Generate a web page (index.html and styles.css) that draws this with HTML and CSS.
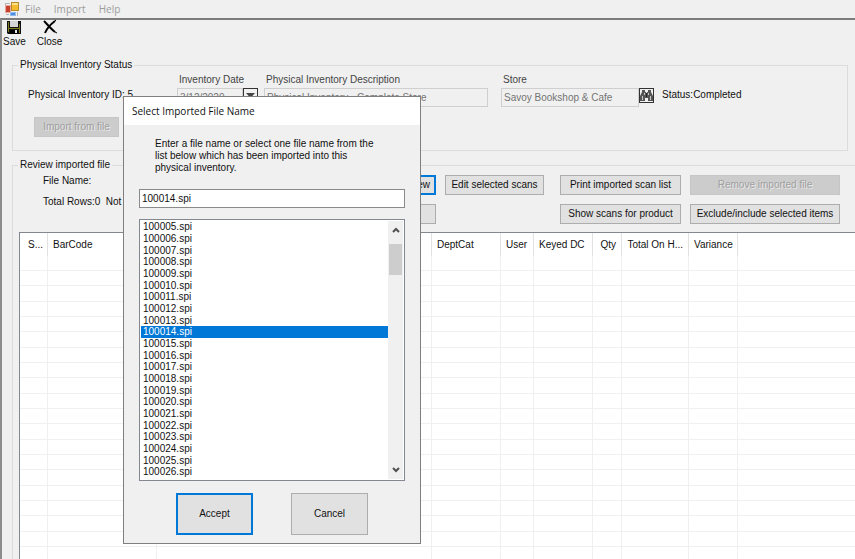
FILE: index.html
```
<!DOCTYPE html>
<html lang="en">
<head>
    <meta charset="UTF-8">
    <meta name="viewport" content="width=device-width, initial-scale=1.0">
    <title>Physical Inventory</title>
    <link rel="stylesheet" href="styles.css">
</head>
<body>
    <nav class="menubar">
        <svg class="app-icon" width="14" height="14" viewBox="0 0 14 14">
            <rect x="0.5" y="3.5" width="5" height="7" fill="#c8412f" stroke="#e6a79c"/>
            <rect x="6.5" y="0.5" width="7" height="8" fill="#f4bc2c" stroke="#b98a2a"/>
            <rect x="7" y="1" width="6" height="2" fill="#fbe08a"/>
            <rect x="5.5" y="10.5" width="5" height="3" fill="#4c8be0" stroke="#8fb8ef"/>
            <path d="M0 1.500h5M0.500 1v2M1 12.500h3M12.500 10v4" stroke="#b4b4b4"/>
        </svg>
        <a href="#">File</a>
        <a href="#">Import</a>
        <a href="#">Help</a>
    </nav>

    <main class="window">
        <div class="toolbar">
            <button class="tool" type="button">
                <svg width="14" height="14" viewBox="0 0 14 14">
                    <path d="M0 1h14v13H1L0 13z" fill="#111"/>
                    <path d="M1 2h1v10H1zM12 4h1v9h-1zM2 8h10v1H2z" fill="#7d7a1c"/>
                    <rect x="3" y="1" width="8" height="6" fill="#d4d4d4"/>
                    <rect x="3" y="10" width="8" height="4" fill="#000"/>
                    <rect x="8" y="10" width="2" height="3" fill="#e8e8e8"/>
                </svg>
                Save
            </button>
            <button class="tool" type="button">
                <svg width="14" height="14" viewBox="0 0 14 14">
                    <path d="M1 1c3 3 7 8 11 11M12 1C8 4 4 8 2 13" fill="none" stroke="#000" stroke-width="2"/>
                    <path d="M12 12l2 1M12 1l1-1" stroke="#000"/>
                </svg>
                Close
            </button>
        </div>

        <fieldset class="status">
            <legend>Physical Inventory Status</legend>
            <div class="status-grid">
                <div class="inventory-id">
                    <span>Physical Inventory ID: 5</span>
                    <button class="btn" type="button" disabled>Import from file</button>
                </div>
                <div class="field">
                    <label for="date">Inventory Date</label>
                    <div class="field-row">
                        <input id="date" type="text" value="3/12/2020" disabled>
                        <button class="picker" type="button" aria-label="Open calendar">
                            <svg width="9" height="6" viewBox="0 0 9 6"><path d="M0 0h9L4.500 5z" fill="#444"/></svg>
                        </button>
                    </div>
                </div>
                <div class="field">
                    <label for="description">Physical Inventory Description</label>
                    <div class="field-row">
                        <input id="description" type="text" value="Physical Inventory - Complete Store" disabled>
                    </div>
                </div>
                <div class="field store">
                    <label for="store">Store</label>
                    <div class="field-row">
                        <input id="store" type="text" value="Savoy Bookshop &amp; Cafe" disabled>
                        <button class="picker" type="button" aria-label="Find store">
                            <svg width="13" height="13" viewBox="0 0 13 13">
                                <path d="M2 1h3v2h1v1h1V3h1V1h3v2l2 4v5H8V9H5v3H0V7l2-4z" fill="#555"/>
                                <path d="M2 7h1v4H2zM10 7h1v4h-1zM4 4h1v2H4zM8 4h1v2H8z" fill="#c8c8c8"/>
                                <path d="M6 4h1v4H6z" fill="#222"/>
                            </svg>
                        </button>
                    </div>
                </div>
                <span class="state">Status:Completed</span>
            </div>
        </fieldset>

        <fieldset class="review">
            <legend>Review imported file</legend>
            <div class="review-head">
                <div class="file-info">
                    <span>File Name:</span>
                    <span>Total Rows:0&nbsp; Not</span>
                </div>
                <div class="actions">
                    <div class="group">
                        <button class="btn focused right" type="button">Review</button>
                        <button class="btn" type="button" aria-label="Clear"></button>
                    </div>
                    <div class="group edit">
                        <button class="btn" type="button">Edit selected scans</button>
                    </div>
                    <div class="group">
                        <button class="btn" type="button">Print imported scan list</button>
                        <button class="btn" type="button">Show scans for product</button>
                    </div>
                    <div class="group">
                        <button class="btn" type="button" disabled>Remove imported file</button>
                        <button class="btn" type="button">Exclude/include selected items</button>
                    </div>
                </div>
            </div>
            <table class="scans">
                <colgroup>
                    <col class="c-seq"><col class="c-barcode"><col class="c-title"><col class="c-dept"><col class="c-user">
                    <col class="c-keyed"><col class="c-qty"><col class="c-total"><col class="c-variance"><col>
                </colgroup>
                <thead>
                    <tr>
                        <th class="first">S...</th>
                        <th>BarCode</th>
                        <th></th>
                        <th>DeptCat</th>
                        <th>User</th>
                        <th>Keyed DC</th>
                        <th class="num">Qty</th>
                        <th class="num">Total On H...</th>
                        <th>Variance</th>
                        <th></th>
                    </tr>
                </thead>
                <tbody id="scanRows"></tbody>
            </table>
        </fieldset>
    </main>

    <form class="dialog" role="dialog" aria-labelledby="dialogTitle">
        <h1 id="dialogTitle">Select Imported File Name</h1>
        <div class="dialog-body">
            <label class="hint" for="fileName">Enter a file name or select one file name from the<br>list below which has been imported into this<br>physical inventory.</label>
            <input id="fileName" class="file-name" type="text" value="100014.spi">
            <div class="listbox">
                <select id="fileList" size="22" aria-label="Imported files"></select>
                <div class="scrollbar">
                    <svg width="8" height="6" viewBox="0 0 8 6"><path d="M1 5l3-3 3 3" fill="none" stroke="#505050" stroke-width="2"/></svg>
                    <div class="thumb"></div>
                    <svg width="8" height="6" viewBox="0 0 8 6"><path d="M1 1l3 3 3-3" fill="none" stroke="#505050" stroke-width="2"/></svg>
                </div>
            </div>
            <div class="dialog-buttons">
                <button class="btn focused" type="submit">Accept</button>
                <button class="btn" type="button">Cancel</button>
            </div>
        </div>
    </form>

    <script>
        const fileList = document.getElementById('fileList');
        const fileName = document.getElementById('fileName');

        for (let number = 100005; number <= 100026; number++) {
            const name = number + '.spi';
            fileList.add(new Option(name, name, false, name === fileName.value));
        }

        fileList.addEventListener('change', function() {
            fileName.value = fileList.value;
        });

        // Empty grid rows
        document.getElementById('scanRows').innerHTML = ('<tr>' + '<td></td>'.repeat(10) + '</tr>').repeat(20);
    </script>
</body>
</html>
```
FILE: styles.css
```
* {
    box-sizing: border-box;
}
body {
    position: relative;
    display: flex;
    flex-direction: column;
    height: 100vh;
    margin: 0;
    overflow: hidden;
    background: #f0f0f0;
    color: #111;
    font: 10px/12px "Liberation Sans", Arial, sans-serif;
}
button, input, select {
    font: inherit;
    color: inherit;
    margin: 0;
}
.menubar {
    display: flex;
    align-items: center;
    gap: 13px;
    height: 18px;
    flex: none;
    padding: 0 5px;
    font: 10px/16px "Open Sans", sans-serif;
}
.menubar a {
    color: #9c9c9c;
    text-decoration: none;
}
.app-icon {
    margin-right: -7px;
}
.window {
    flex: 1;
    min-height: 0;
    border-top: 2px solid #7c7c7c;
    border-left: 2px solid #8c8c8c;
}
.toolbar {
    display: flex;
    gap: 11px;
    height: 38px;
    padding-left: 1px;
}
.tool {
    display: flex;
    flex-direction: column;
    align-items: center;
    gap: 2px;
    padding: 0;
    border: none;
    background: none;
}
fieldset {
    min-width: 0;
    margin: 0 7px 0 10px;
    padding: 0;
    border: 1px solid #dcdcdc;
}
legend {
    margin-left: 5px;
    padding: 0 2px;
    line-height: 14px;
}
.status {
    height: 93px;
}
.status-grid {
    display: grid;
    grid-template-columns: 152px 81px 224px 160px 1fr;
    column-gap: 6px;
    padding: 2px 0 0 6px;
}
.store {
    padding-left: 7px;
}
.inventory-id {
    display: flex;
    flex-direction: column;
    align-items: flex-start;
    gap: 16px;
    padding: 15px 0 0 9px;
    white-space: nowrap;
}
.inventory-id .btn {
    width: 85px;
    margin-left: 6px;
}
.field label {
    display: block;
    padding: 0 2px 2px;
    color: #444;
}
.field-row {
    display: flex;
    align-items: flex-start;
}
.field-row input {
    flex: 1;
    min-width: 0;
    height: 19px;
    padding: 0 2px;
    border: 1px solid #cfcfcf;
    background: #f0f0f0;
    color: #747474;
}
.picker {
    display: flex;
    align-items: center;
    justify-content: center;
    width: 15px;
    height: 15px;
    padding: 0;
    border: 1px solid #333;
    background: #f0f0f0;
}
.state {
    padding: 15px 0 0 2px;
}
.btn {
    height: 20px;
    padding: 0 4px;
    border: 1px solid #adadad;
    background: #e1e1e1;
    white-space: nowrap;
}
.btn:disabled {
    border-color: #c6c6c6;
    background: #cccccc;
    color: #a0a0a0;
    text-shadow: 1px 1px #e8e8e8;
}
.btn.focused {
    border: 2px solid #0078d7;
}
.right {
    text-align: right;
}
.review {
    margin-top: 7px;
    margin-right: 0;
    border-right: none;
}
.review-head {
    display: flex;
    justify-content: space-between;
    height: 60px;
    padding: 3px 15px 0 30px;
}
.file-info {
    display: flex;
    flex-direction: column;
    gap: 9px;
}
.actions {
    display: grid;
    grid-template-columns: 86px 99px 121px 150px;
    gap: 9px;
}
.group {
    display: flex;
    flex-direction: column;
    gap: 9px;
}
.edit {
    margin-right: 7px;
    margin-left: -7px;
}
.group:first-child {
    margin-right: 7px;
    margin-left: -7px;
}
.edit .btn {
    width: 99px;
}
.scans {
    width: calc(100% - 6px);
    margin-left: 6px;
    table-layout: fixed;
    border-collapse: separate;
    border-spacing: 0;
    border-top: 1px solid #828790;
    border-left: 1px solid #828790;
    background: #fff;
}
.c-seq { width: 28px; }
.c-barcode { width: 109px; }
.c-title { width: 275px; }
.c-dept { width: 69px; }
.c-user { width: 33px; }
.c-keyed { width: 59px; }
.c-qty { width: 29px; }
.c-total { width: 67px; }
.c-variance { width: 49px; }
.scans th {
    height: 23px;
    padding: 0 5px;
    border-right: 1px solid #e2e2e2;
    font-weight: normal;
    text-align: left;
    white-space: nowrap;
}
.scans th.first {
    padding: 0 0 0 8px;
}
.scans th.num {
    text-align: right;
}
.scans td {
    height: 15px;
    padding: 0;
    border-right: 1px solid #f0f0f0;
    border-bottom: 1px solid #f0f0f0;
}
.scans tr:nth-child(3n) td {
    height: 16px;
}
.scans th:last-child, .scans td:last-child {
    border-right: none;
}

/* Dialog */
.dialog {
    position: absolute;
    left: 123px;
    top: 96px;
    width: 298px;
    border: 1px solid #7f7f7f;
    background: #f0f0f0;
}
.dialog h1 {
    margin: 0;
    padding: 5px 8px;
    background: #fff;
    font: 10px/18px "Open Sans", sans-serif;
}
.dialog-body {
    display: flex;
    flex-direction: column;
    padding: 13px 15px 8px;
}
.hint {
    padding: 0 0 15px 16px;
    white-space: nowrap;
}
.file-name {
    height: 19px;
    padding: 0 2px;
    border: 1px solid #8a8a8a;
    background: #fff;
    outline: none;
}
.listbox {
    display: flex;
    margin-top: 11px;
    padding: 1px;
    border: 1px solid #828790;
    background: #fff;
}
.listbox select {
    flex: 1;
    height: 258px;
    padding: 0;
    border: none;
    outline: none;
    overflow: hidden;
    background: #fff;
}
.listbox option {
    height: 12px;
    min-height: 0;
    padding: 0 2px;
    line-height: 12px;
}
.listbox option:nth-child(3n) {
    height: 11px;
    line-height: 11px;
}
.listbox option:checked {
    background: #0078d7 linear-gradient(#0078d7, #0078d7);
    color: #fff;
}
.scrollbar {
    display: flex;
    flex-direction: column;
    align-items: center;
    width: 15px;
    padding: 6px 0;
    background: #f0f0f0;
}
.scrollbar .thumb {
    width: 13px;
    height: 31px;
    margin: 11px 0 auto;
    background: #cdcdcd;
}
.dialog-buttons {
    display: flex;
    justify-content: center;
    gap: 38px;
    padding-top: 12px;
}
.dialog-buttons .btn {
    width: 77px;
    height: 42px;
}
```
